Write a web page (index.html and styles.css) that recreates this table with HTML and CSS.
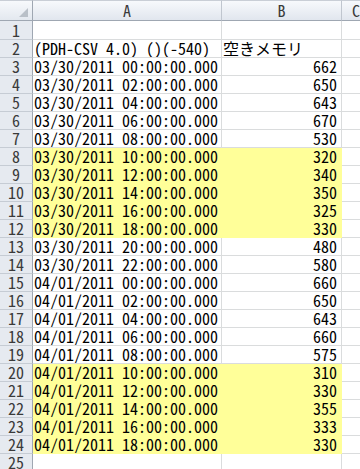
FILE: index.html
```html
<!DOCTYPE html>
<html lang="ja">
<head>
<meta charset="utf-8">
<title>Sheet</title>
<link rel="stylesheet" href="styles.css">
</head>
<body>
<div class="sheet">
  <div class="corner"><svg class="tri" width="9" height="9" viewBox="0 0 9 9"><polygon points="9,0 9,9 0,9" fill="#b9c0c8"/></svg></div>
  <div class="ch">A</div><div class="ch">B</div><div class="ch last">C</div>

  <div class="rh first">1</div><div class="c first"></div><div class="c first"></div><div class="c first last"></div>
  <div class="rh">2</div><div class="c">(PDH-CSV 4.0) ()(-540)</div><div class="c">空きメモリ</div><div class="c last"></div>
  <div class="rh">3</div><div class="c">03/30/2011 00:00:00.000</div><div class="c num">662</div><div class="c last"></div>
  <div class="rh">4</div><div class="c">03/30/2011 02:00:00.000</div><div class="c num">650</div><div class="c last"></div>
  <div class="rh">5</div><div class="c">03/30/2011 04:00:00.000</div><div class="c num">643</div><div class="c last"></div>
  <div class="rh">6</div><div class="c">03/30/2011 06:00:00.000</div><div class="c num">670</div><div class="c last"></div>
  <div class="rh">7</div><div class="c">03/30/2011 08:00:00.000</div><div class="c num">530</div><div class="c last"></div>
  <div class="rh">8</div><div class="c hl">03/30/2011 10:00:00.000</div><div class="c num hl">320</div><div class="c last"></div>
  <div class="rh">9</div><div class="c hl">03/30/2011 12:00:00.000</div><div class="c num hl">340</div><div class="c last"></div>
  <div class="rh">10</div><div class="c hl">03/30/2011 14:00:00.000</div><div class="c num hl">350</div><div class="c last"></div>
  <div class="rh">11</div><div class="c hl">03/30/2011 16:00:00.000</div><div class="c num hl">325</div><div class="c last"></div>
  <div class="rh">12</div><div class="c hl">03/30/2011 18:00:00.000</div><div class="c num hl">330</div><div class="c last"></div>
  <div class="rh">13</div><div class="c">03/30/2011 20:00:00.000</div><div class="c num">480</div><div class="c last"></div>
  <div class="rh">14</div><div class="c">03/30/2011 22:00:00.000</div><div class="c num">580</div><div class="c last"></div>
  <div class="rh">15</div><div class="c">04/01/2011 00:00:00.000</div><div class="c num">660</div><div class="c last"></div>
  <div class="rh">16</div><div class="c">04/01/2011 02:00:00.000</div><div class="c num">650</div><div class="c last"></div>
  <div class="rh">17</div><div class="c">04/01/2011 04:00:00.000</div><div class="c num">643</div><div class="c last"></div>
  <div class="rh">18</div><div class="c">04/01/2011 06:00:00.000</div><div class="c num">660</div><div class="c last"></div>
  <div class="rh">19</div><div class="c">04/01/2011 08:00:00.000</div><div class="c num">575</div><div class="c last"></div>
  <div class="rh">20</div><div class="c hl">04/01/2011 10:00:00.000</div><div class="c num hl">310</div><div class="c last"></div>
  <div class="rh">21</div><div class="c hl">04/01/2011 12:00:00.000</div><div class="c num hl">330</div><div class="c last"></div>
  <div class="rh">22</div><div class="c hl">04/01/2011 14:00:00.000</div><div class="c num hl">355</div><div class="c last"></div>
  <div class="rh">23</div><div class="c hl">04/01/2011 16:00:00.000</div><div class="c num hl">333</div><div class="c last"></div>
  <div class="rh">24</div><div class="c hl">04/01/2011 18:00:00.000</div><div class="c num hl">330</div><div class="c last"></div>
  <div class="rh">25</div><div class="c"></div><div class="c"></div><div class="c last"></div>
</div>
</body>
</html>
```
FILE: styles.css
```css
html, body {
  margin: 0;
  padding: 0;
  background: #ffffff;
  overflow: hidden;
}
.sheet {
  display: grid;
  grid-template-columns: 33px 189px 120px 18px;
  grid-template-rows: 21px 19px repeat(24, 18px);
  width: 360px;
  font-family: "Noto Sans Mono CJK JP", "DejaVu Sans Mono", "Noto Sans CJK JP", monospace;
  font-size: 16px;
  color: #000;
}
.sheet > div {
  box-sizing: border-box;
  overflow: hidden;
  white-space: nowrap;
}
.corner {
  position: relative;
  background: linear-gradient(#f7f9fc, #e3e8ef);
  border-top: 1px solid #c9ced6;
  border-right: 1px solid #9fa7b2;
  border-bottom: 1px solid #9fa7b2;
}
.tri {
  position: absolute;
  right: 4px;
  bottom: 3px;
}
.ch {
  background: linear-gradient(#f7f9fc, #e1e6ee);
  border-top: 1px solid #c9ced6;
  border-right: 1px solid #c0c6cf;
  border-bottom: 1px solid #9fa7b2;
  text-align: center;
  line-height: 19px;
  color: #3a3a3a;
}
.ch.last {
  border-right: none;
  text-align: left;
  padding-left: 10px;
}
.rh {
  background: #e6eaf0;
  border-right: 1px solid #9fa7b2;
  border-bottom: 1px solid #c6ccd4;
  color: #3a3a3a;
  display: flex;
  align-items: flex-end;
  justify-content: center;
  line-height: 17px;
}
.c {
  border-right: 1px solid #dadcdd;
  border-bottom: 1px solid #dadcdd;
  padding-left: 1px;
  display: flex;
  align-items: flex-end;
  line-height: 17px;
}
.c.last {
  border-right: none;
}
.num {
  justify-content: flex-end;
  padding-right: 4px;
}
.hl {
  background: #ffff99;
  border-color: #ffff99;
}
```
